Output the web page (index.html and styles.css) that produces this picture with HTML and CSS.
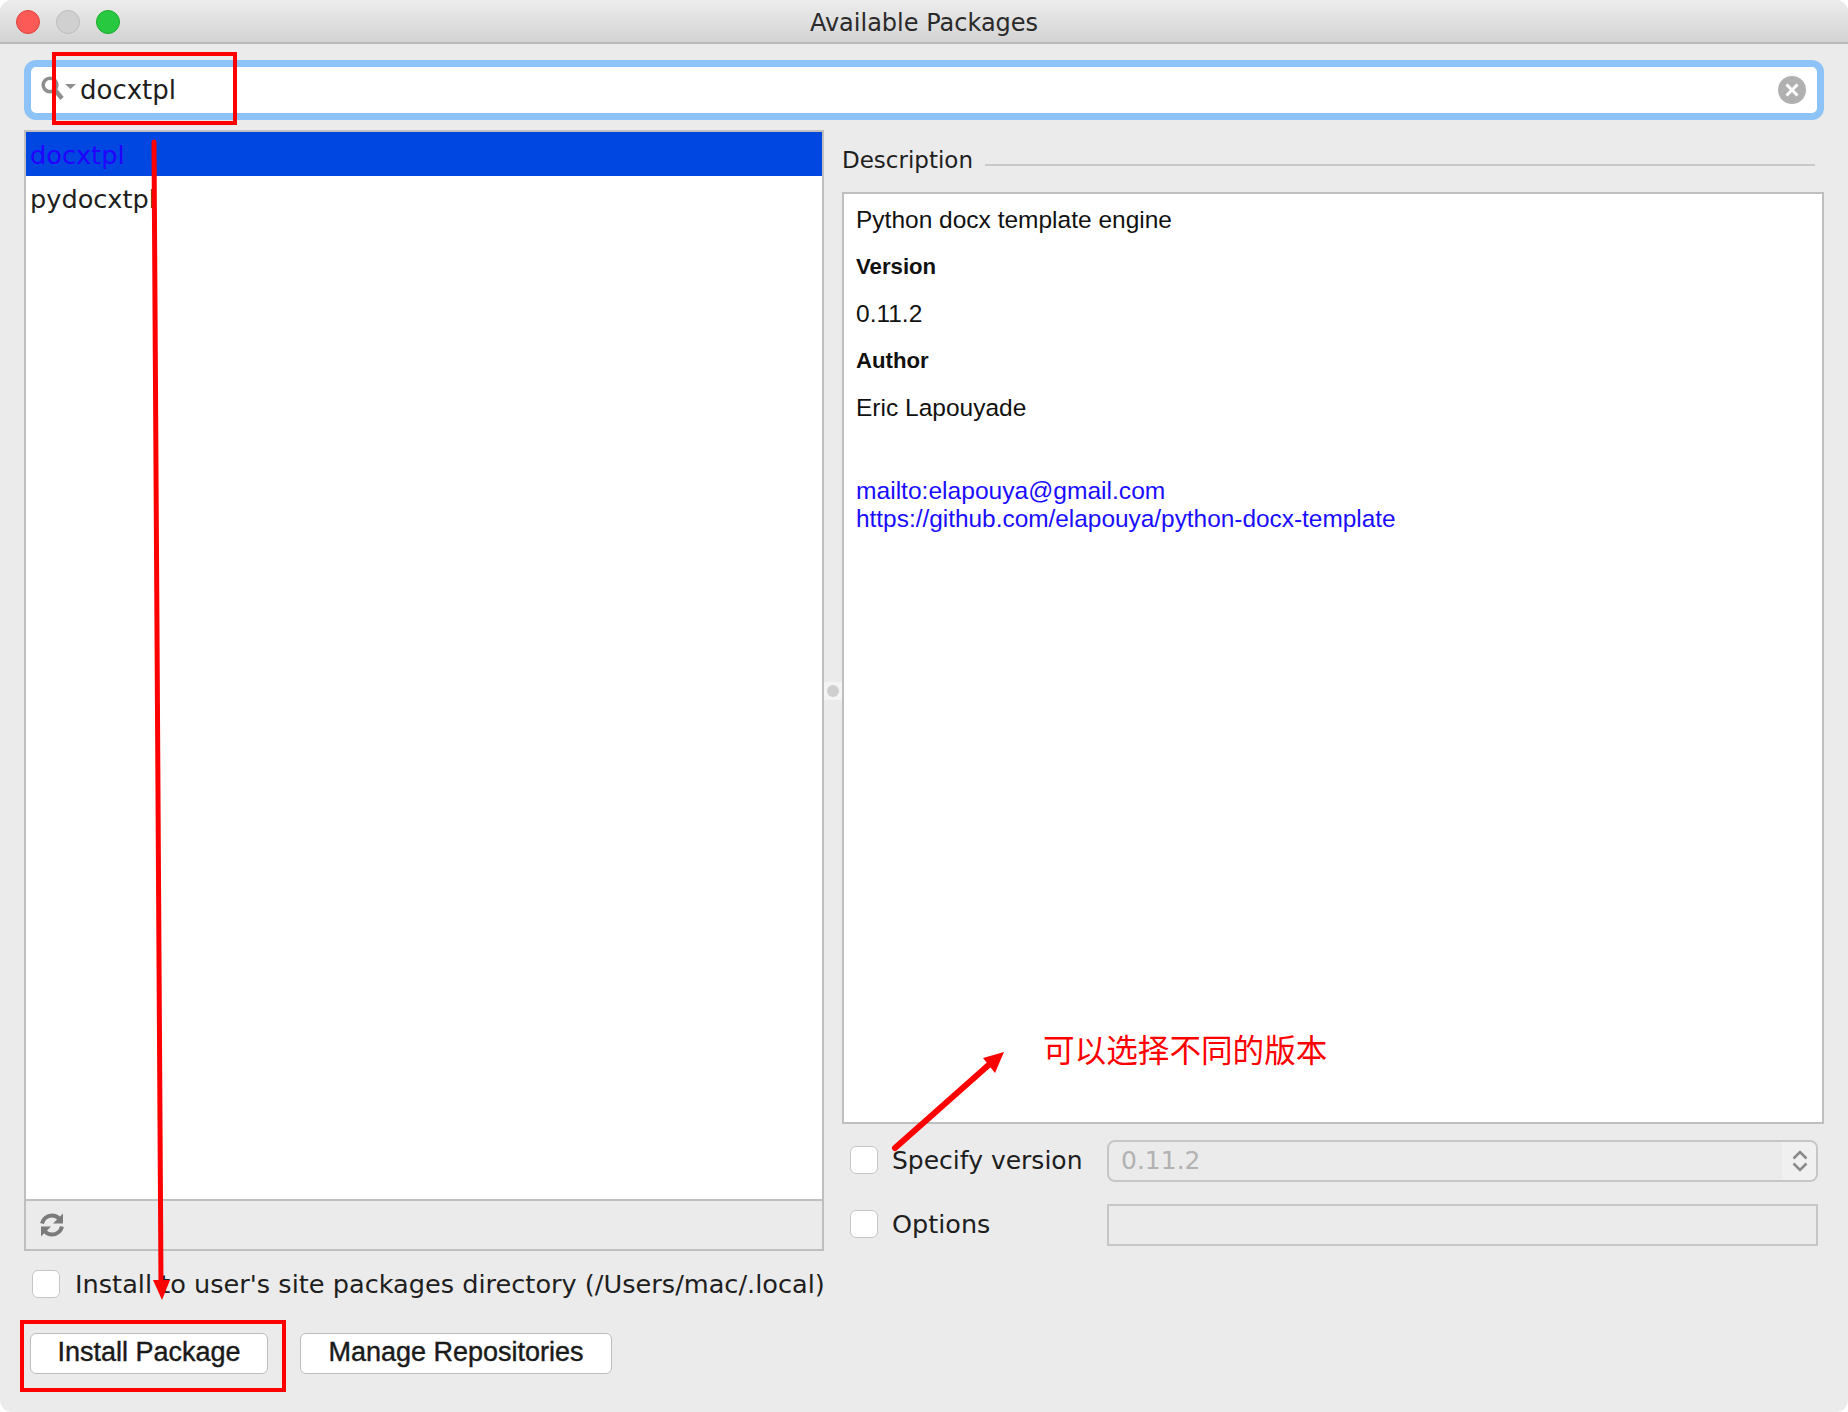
FILE: index.html
```html
<!DOCTYPE html>
<html lang="en">
<head>
  <meta charset="UTF-8">
  <meta name="viewport" content="width=device-width, initial-scale=1.0">
  <title>Available Packages</title>
  <link rel="stylesheet" href="styles.css">
</head>
<body>
  <div class="window">
    <header class="titlebar">
      <div class="lights">
        <span class="light light-close"></span>
        <span class="light light-min"></span>
        <span class="light light-max"></span>
      </div>
      <h1>Available Packages</h1>
    </header>

    <div class="content">
      <div class="search">
        <svg class="search-icon" width="36" height="26" viewBox="0 0 36 26">
          <circle cx="9" cy="9" r="6.800" fill="none" stroke="#8e8e8e" stroke-width="3.600"/>
          <path d="M14 14l7 8.500" stroke="#8e8e8e" stroke-width="4.400" fill="none"/>
          <path d="M24 8h11l-5.500 5z" fill="#8e8e8e"/>
        </svg>
        <span class="search-text">docxtpl</span>
        <svg class="clear-icon" width="28" height="28" viewBox="0 0 28 28">
          <circle cx="14" cy="14" r="14" fill="#b0b0b0"/>
          <path d="M8.500 8.500l11 11M19.500 8.500l-11 11" stroke="#fff" stroke-width="3" fill="none"/>
        </svg>
      </div>

      <div class="main">
        <section class="left">
          <div class="list-panel">
            <ul class="list">
              <li class="selected">docxtpl</li>
              <li>pydocxtpl</li>
            </ul>
            <div class="list-footer">
              <svg width="26" height="26" viewBox="0 0 26 26" fill="none" stroke="#7b7b7b" stroke-width="4">
                <path d="M3 11.500C4 7 8 3.500 13 3.500c3 0 5.500 1.200 7.500 3.500"/>
                <path d="M24 1.500v10h-10z" fill="#7b7b7b" stroke="none"/>
                <path d="M23 14.500C22 19 18 22.500 13 22.500c-3 0-5.500-1.200-7.500-3.500"/>
                <path d="M2 24.500v-10h10z" fill="#7b7b7b" stroke="none"/>
              </svg>
            </div>
          </div>
          <label class="check-row site-row">
            <span class="checkbox"></span>
            <span class="ui-text">Install to user's site packages directory (/Users/mac/.local)</span>
          </label>
          <div class="buttons">
            <button class="btn btn-install">Install Package</button>
            <button class="btn btn-repos">Manage Repositories</button>
          </div>
        </section>

        <div class="splitter"><span class="grip"></span></div>

        <section class="right">
          <div class="desc-head">
            <span class="ui-text desc-label">Description</span>
            <span class="desc-line"></span>
          </div>
          <div class="desc-box">
            <p>Python docx template engine</p>
            <p><b>Version</b></p>
            <p>0.11.2</p>
            <p><b>Author</b></p>
            <p>Eric Lapouyade</p>
            <div class="links">
              <a href="#">mailto:elapouya@gmail.com</a>
              <a href="#">https://github.com/elapouya/python-docx-template</a>
            </div>
          </div>
          <div class="field-row field-version">
            <span class="checkbox"></span>
            <span class="ui-text field-label">Specify version</span>
            <div class="select">
              <span class="select-value">0.11.2</span>
              <span class="stepper">
                <svg width="16" height="24" viewBox="0 0 16 24" fill="none" stroke="#8a8a8a" stroke-width="2.600">
                  <path d="M1.500 9.500L8 3l6.500 6.500M1.500 14.500L8 21l6.500-6.500"/>
                </svg>
              </span>
            </div>
          </div>
          <div class="field-row field-options">
            <span class="checkbox"></span>
            <span class="ui-text field-label">Options</span>
            <div class="text-input"></div>
          </div>
        </section>
      </div>
    </div>

    <!-- red markup drawn over the screenshot -->
    <svg class="markup" width="1848" height="1412" viewBox="0 0 1848 1412" fill="none">
      <rect x="54" y="54" width="181" height="69" stroke="#fe0000" stroke-width="4"/>
      <rect x="22" y="1322" width="262" height="68" stroke="#fe0000" stroke-width="4"/>
      <path d="M154 142L161 1285" stroke="#fe0000" stroke-width="5" stroke-linecap="round"/>
      <path d="M162 1300L153 1280H170z" fill="#fe0000"/>
      <path d="M895 1148L992 1062" stroke="#fe0000" stroke-width="6" stroke-linecap="round"/>
      <path d="M1004 1052L983 1058L995 1073z" fill="#fe0000"/>
    </svg>
    <div class="note">可以选择不同的版本</div>
  </div>
</body>
</html>
```

FILE: styles.css
```css
:root {
  --panel: #ebebeb;
  --border: #bfbfbf;
  --field-border: #c6c6c6;
  --text: #1e1e1e;
  --link: #1a0dff;
}

* {
  margin: 0;
  padding: 0;
  box-sizing: border-box;
}

html, body {
  width: 1848px;
  height: 1412px;
  overflow: hidden;
  background-color: #fff;
}

.window {
  position: relative;
  width: 1848px;
  height: 1412px;
  display: flex;
  flex-direction: column;
  background-color: var(--panel);
  border-radius: 12px;
  overflow: hidden;
  color: var(--text);
  font-family: 'DejaVu Sans', sans-serif;
}

.titlebar {
  position: relative;
  flex: none;
  height: 44px;
  display: flex;
  align-items: center;
  justify-content: center;
  padding-top: 3px;
  background: linear-gradient(#ededed, #d3d3d3);
  border-bottom: 2px solid #b9b9b9;
}

.titlebar h1 {
  font-size: 24px;
  font-weight: 400;
  color: #2a2a2a;
}

.lights {
  position: absolute;
  left: 16px;
  top: 10px;
  display: flex;
  gap: 16px;
}

.light {
  width: 24px;
  height: 24px;
  border-radius: 50%;
}

.light-close {
  background-color: #fc5a56;
  border: 1px solid #e0443e;
}

.light-min {
  background-color: #d0d0d0;
  border: 1px solid #bcbcbc;
}

.light-max {
  background-color: #28c840;
  border: 1px solid #1aab29;
}

.content {
  flex: 1;
  display: flex;
  flex-direction: column;
  padding: 16px 24px 0 24px;
}

.search {
  flex: none;
  height: 60px;
  display: flex;
  align-items: center;
  padding: 0 11px 0 10px;
  background-color: #fff;
  border: 7px solid #8ec3f8;
  border-radius: 12px;
}

.search-icon {
  flex: none;
  margin-top: -3px;
}

.search-text {
  flex: 1;
  margin-left: 3px;
  font-size: 26px;
}

.main {
  flex: 1;
  display: flex;
  margin-top: 10px;
}

.left {
  width: 800px;
  display: flex;
  flex-direction: column;
}

.list-panel {
  height: 1121px;
  display: flex;
  flex-direction: column;
  border: 2px solid var(--border);
}

.list {
  flex: 1;
  list-style: none;
  background-color: #fff;
  font-size: 25.6px;
}

.list li {
  height: 44px;
  line-height: 46px;
  padding-left: 4px;
}

.list .selected {
  background-color: #0047e1;
  color: #2200ff;
}

.list-footer {
  flex: none;
  height: 50px;
  display: flex;
  align-items: center;
  padding-left: 13px;
  border-top: 2px solid var(--border);
}

.check-row {
  display: flex;
  align-items: center;
}

.site-row {
  margin-top: 18px;
  padding-left: 8px;
}

.site-row .ui-text {
  margin-left: 15px;
  font-size: 25.6px;
  white-space: nowrap;
}

.checkbox {
  flex: none;
  width: 28px;
  height: 28px;
  background-color: #fff;
  border: 1px solid #c6c6c6;
  border-radius: 6px;
}

.ui-text {
  font-size: 25px;
  color: var(--text);
}

.buttons {
  display: flex;
  gap: 32px;
  margin-top: 34px;
  padding-left: 6px;
}

.btn {
  height: 41px;
  padding-bottom: 2px;
  background-color: #fff;
  border: 1px solid #bdbdbd;
  border-radius: 6px;
  font-family: 'Liberation Sans', sans-serif;
  font-size: 27px;
  color: #1a1a1a;
  -webkit-text-stroke: 0.4px #1a1a1a;
}

.btn-install {
  width: 238px;
}

.btn-repos {
  width: 312px;
}

.splitter {
  width: 18px;
  display: flex;
  flex-direction: column;
  justify-content: flex-start;
}

.grip {
  width: 18px;
  height: 18px;
  margin-top: 552px;
  background-color: #f4f4f4;
  display: flex;
  align-items: center;
  justify-content: center;
}

.grip::after {
  content: '';
  width: 12px;
  height: 12px;
  border-radius: 50%;
  background-color: #cfcfcf;
}

.right {
  width: 982px;
  display: flex;
  flex-direction: column;
}

.desc-head {
  height: 62px;
  display: flex;
  align-items: center;
  padding-bottom: 2px;
}

.ui-text.desc-label {
  font-size: 23px;
}

.desc-line {
  width: 830px;
  height: 2px;
  margin-left: 12px;
  margin-top: 10px;
  background-color: #c8c8c8;
}

.desc-box {
  height: 932px;
  padding: 10px 12px;
  background-color: #fff;
  border: 2px solid var(--border);
  font-family: 'Liberation Sans', sans-serif;
  font-size: 24.5px;
  color: #111;
}

.desc-box p {
  height: 47px;
  line-height: 32px;
}

.desc-box b {
  display: block;
  font-size: 22.2px;
  line-height: 31px;
}

.links {
  margin-top: 38px;
  font-size: 24.4px;
}

.links a {
  display: block;
  line-height: 28px;
  color: var(--link);
  text-decoration: none;
}

.links a:first-child {
  font-size: 24.6px;
}

.field-row {
  display: flex;
  align-items: center;
  width: 976px;
}

.field-version {
  margin-top: 16px;
}

.field-options {
  margin-top: 22px;
}

.field-row .checkbox {
  margin-left: 8px;
  margin-bottom: 2px;
}

.field-label {
  width: 215px;
  margin-left: 14px;
  padding-bottom: 2px;
}

.field-options .field-label {
  font-size: 25.5px;
}

.select {
  flex: 1;
  height: 42px;
  display: flex;
  align-items: center;
  justify-content: space-between;
  border: 2px solid var(--field-border);
  border-radius: 8px;
}

.select-value {
  margin-left: 12px;
  padding-bottom: 2px;
  font-size: 25px;
  color: #b2b2b2;
}

.stepper {
  width: 34px;
  height: 100%;
  display: flex;
  align-items: center;
  justify-content: center;
  padding-left: 2px;
  background-color: #f0f0f0;
  border-radius: 0 6px 6px 0;
}

.text-input {
  flex: 1;
  height: 42px;
  border: 2px solid var(--field-border);
}

.markup {
  position: absolute;
  left: 0;
  top: 0;
  pointer-events: none;
}

.note {
  position: absolute;
  left: 1043px;
  top: 1028px;
  font-family: 'Noto Sans CJK SC', sans-serif;
  font-size: 31.6px;
  line-height: 40px;
  color: #fe0000;
}
```
